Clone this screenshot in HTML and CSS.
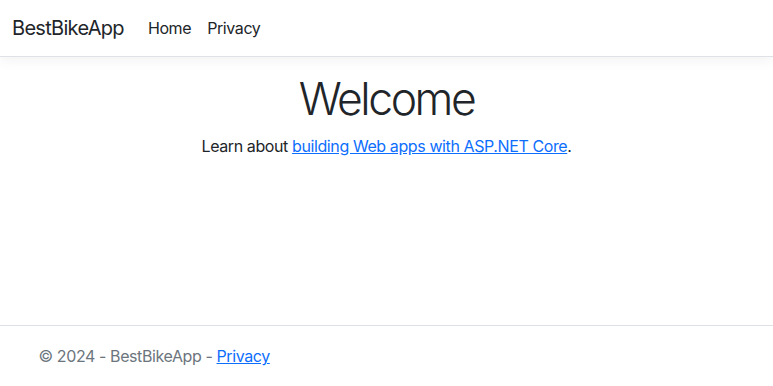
FILE: index.html
```html
<!DOCTYPE html>
<html lang="en">
  <head>
    <meta charset="UTF-8" />
    <meta name="viewport" content="width=device-width, initial-scale=1.0" />
    <title>Home Page - BestBikeApp</title>
    <link rel="stylesheet" href="styles.css">
  </head>
  <body>
    <header class="header">
      <nav class="navbar">
        <div class="navbar__inner">
          <a class="navbar__brand" href="#">BestBikeApp</a>
          <ul class="navbar__nav">
            <li><a class="navbar__link" href="#">Home</a></li>
            <li><a class="navbar__link" href="#">Privacy</a></li>
          </ul>
        </div>
      </nav>
    </header>
    <main class="main">
      <div class="welcome">
        <h1 class="welcome__title">Welcome</h1>
        <p class="welcome__text">
          Learn about <a class="link" href="#">building Web apps with ASP.NET Core</a>.
        </p>
      </div>
    </main>
    <footer class="footer">
      <div class="footer__inner">
        &copy; 2024 - BestBikeApp - <a class="link" href="#">Privacy</a>
      </div>
    </footer>
  </body>
</html>
```

FILE: styles.css
```css
* {
  margin: 0;
  padding: 0;
  box-sizing: border-box;
}
html {
  font-size: 16px;
}
body {
  display: flex;
  flex-direction: column;
  min-height: 100vh;
  font-family: Inter, "Liberation Sans", Arial, sans-serif;
  font-size: 1rem;
  font-weight: 400;
  line-height: 1.5;
  letter-spacing: -0.025em;
  color: #212529;
  background-color: #fff;
}
.header {
  margin-bottom: 1rem;
}
.navbar {
  padding: 0.5rem 0;
  background-color: #fff;
  border-bottom: 1px solid #dee2e6;
  box-shadow: 0 0.25rem 0.75rem rgba(0, 0, 0, 0.05);
}
.navbar__inner {
  display: flex;
  align-items: center;
  padding: 0 0.75rem;
}
.navbar__brand {
  padding: 0.3125rem 0;
  margin-right: 1rem;
  font-size: 1.25rem;
  letter-spacing: -0.035em;
  color: #212529;
  text-decoration: none;
  white-space: nowrap;
}
.navbar__nav {
  display: flex;
  list-style: none;
}
.navbar__link {
  display: block;
  padding: 0.5rem;
  color: #212529;
  text-decoration: none;
}
.main {
  flex: 1;
  padding: 0 0.75rem 1rem;
}
.welcome {
  text-align: center;
}
.welcome__title {
  font-size: 44.5px;
  font-weight: 300;
  line-height: 1.2;
  letter-spacing: -0.055em;
  margin-bottom: 0.5rem;
}
.welcome__text {
  margin-bottom: 1rem;
}
.link {
  color: #0d6efd;
  text-decoration: underline;
}
.footer {
  border-top: 1px solid #dee2e6;
  line-height: 60px;
  white-space: nowrap;
  color: #6c757d;
}
.footer__inner {
  max-width: 720px;
  margin: 0 auto;
  padding: 0 0.75rem;
}
```
